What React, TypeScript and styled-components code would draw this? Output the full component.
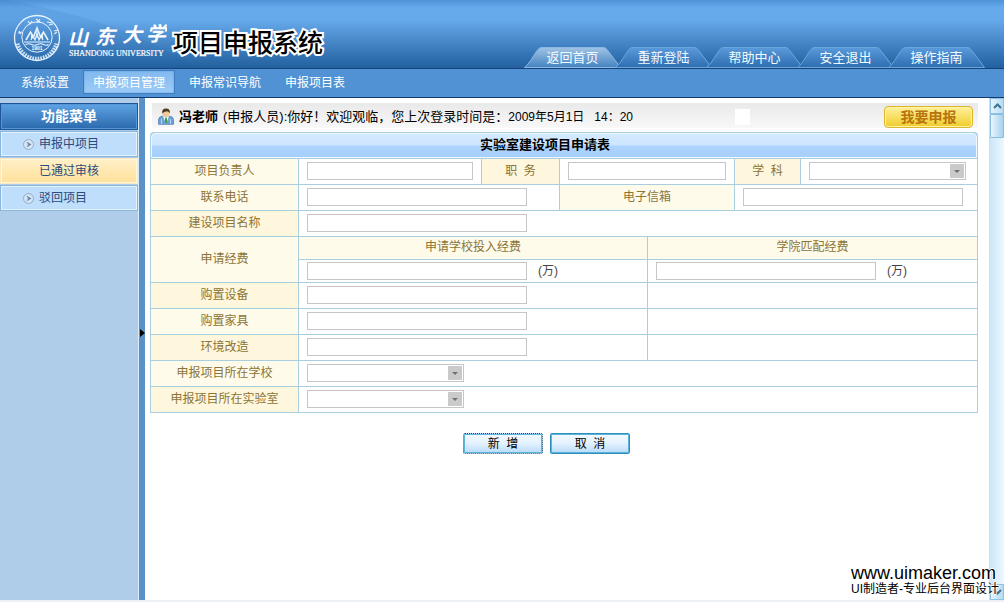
import React from 'react';
import styled, { createGlobalStyle, css } from 'styled-components';

const line = '#a9cfdf';
const sans = '"Liberation Sans", "Noto Sans CJK SC", sans-serif';

const GlobalStyle = createGlobalStyle`
  *, *::before, *::after { box-sizing: border-box; }
  body { margin: 0; background: #fff; color: #000; font: 12px/16px ${sans}; }
  button, input, select { font: inherit; }
  a { color: inherit; text-decoration: none; }
`;

const Page = styled.div`
  position: relative;
  display: flex;
  flex-direction: column;
  min-height: 100vh;
  border-bottom: 2px solid #edf1f5;
`;

const Header = styled.header`
  position: relative;
  display: flex;
  justify-content: space-between;
  align-items: flex-end;
  height: 69px;
  padding: 0 19px 0 12px;
  border-bottom: 1px solid #17427a;
  background: linear-gradient(#4d93d6 0, #67abec 8px, #66a9ea 20px, #4a8acb 40px, #22609f 68px);
`;

const HeaderWave = styled.svg`
  position: absolute;
  left: 0;
  top: 0;
`;

const Brand = styled.div`
  position: relative;
  display: flex;
  align-items: center;
  align-self: flex-start;
  height: 68px;
`;

const SystemName = styled.h1`
  margin: 18px 0 0 6px;
  font-size: 25px;
  line-height: 32px;
  font-weight: 500;
  color: #000;
  -webkit-text-stroke: 4px #fff;
  paint-order: stroke fill;
  white-space: nowrap;
`;

const Tabs = styled.nav`
  position: relative;
  display: flex;
`;

const Tab = styled.a`
  position: relative;
  width: 97px;
  height: 21px;
  margin-right: -6px;
  font-size: 13px;
  line-height: 21px;
  text-align: center;
  color: #f2fbff;
  &:last-child { margin-right: 0; }
`;

const TabShape = styled.svg`
  position: absolute;
  left: 0;
  top: 0;
`;

const TabText = styled.span`
  position: relative;
`;

const MainNav = styled.nav`
  display: flex;
  gap: 4px;
  height: 29px;
  padding: 1px 11px 3px;
  border-bottom: 1px solid #123a70;
  background: #5192d4;
`;

const NavItem = styled.a<{ $active?: boolean }>`
  padding: 1px 9px 0;
  border: 1px solid transparent;
  line-height: 23px;
  color: #fff;
  ${p => p.$active && css`
    border-color: #3f7dc0;
    background: linear-gradient(#83b9ef, #9ccbf7);
    box-shadow: inset 0 0 2px #5a97d6;
  `}
`;

const Body = styled.div`
  display: flex;
  flex: 1;
`;

const Sidebar = styled.aside`
  width: 139px;
  padding-top: 5px;
  border-right: 1px solid #dcecfa;
  background: #afcce9;
`;

const MenuTitle = styled.h2`
  margin: 0;
  height: 27px;
  border: 1px solid #1d5596;
  box-shadow: inset 0 0 0 1px #5596d6;
  background: linear-gradient(#5fa3e4, #2a69ad);
  color: #fff;
  font-size: 14px;
  line-height: 25px;
  text-align: center;
`;

const MenuItem = styled.a<{ $active?: boolean }>`
  display: flex;
  align-items: center;
  gap: 5px;
  height: 26px;
  margin-top: 1px;
  padding-left: 22px;
  border: 1px solid ${p => (p.$active ? '#fbe9bd' : '#8ab6db')};
  box-shadow: inset 0 0 0 1px ${p => (p.$active ? '#fff6dc' : '#e2f3ff')};
  background: ${p => (p.$active ? 'linear-gradient(#fff0c8, #ffe09a)' : '#bfdefc')};
  color: #2c4a7c;
`;

const IconSlot = styled.span`
  display: flex;
  width: 11px;
`;

const Splitter = styled.button`
  display: flex;
  align-items: center;
  justify-content: flex-end;
  width: 6px;
  padding: 0 0 32px;
  border: 0;
  background: #5a92c8;
`;

const Content = styled.main`
  flex: 1;
  min-width: 0;
  padding: 5px 11px 20px 5px;
`;

const InfoBar = styled.div`
  display: flex;
  align-items: center;
  height: 25px;
  margin-left: 2px;
  padding: 2px 5px 0 6px;
  background: linear-gradient(#e9e9e9, #f8f8f8);
  font-size: 13px;
  white-space: nowrap;
`;

const UserName = styled.strong`
  margin: 0 5px;
`;

const LoginTime = styled.time`
  font-size: 12px;
`;

const Clock = styled.span`
  margin-left: 10px;
`;

const BlankImage = styled.span`
  width: 15px;
  height: 16px;
  margin-left: auto;
  background: #fff;
`;

const ApplyButton = styled.button`
  width: 89px;
  height: 22px;
  margin-left: 134px;
  padding: 0;
  border: 1px solid #dcb52c;
  border-radius: 4px;
  box-shadow: inset 0 0 0 1px #fff3a4;
  background: linear-gradient(#fff09a, #f0cc2c);
  color: #b8740e;
  font-size: 14px;
  line-height: 18px;
  font-weight: 700;
`;

const FormGrid = styled.form`
  display: grid;
  grid-template-columns:
    minmax(0, 147fr) minmax(0, 182fr) minmax(0, 77fr) minmax(0, 87fr)
    minmax(0, 86fr) minmax(0, 65fr) minmax(0, 176fr);
  grid-auto-rows: minmax(22px, auto);
  gap: 1px;
  margin-top: 4px;
  padding: 1px;
  border-radius: 4px 4px 0 0;
  background: ${line};
`;

const FormTitle = styled.h2`
  grid-column: 1 / -1;
  height: 25px;
  margin: 0;
  padding-right: 38px;
  border: 1px solid #eff8ff;
  border-radius: 4px 4px 0 0;
  background: linear-gradient(#d3e9ff 0, #cde6ff 48%, #aed3fd 52%, #a6cffc 100%);
  font-size: 13px;
  line-height: 21px;
  text-align: center;
`;

const Label = styled.label<{ $span?: number; $rows?: number; $tone?: 'deep'; $low?: boolean }>`
  display: flex;
  align-items: center;
  justify-content: center;
  grid-column: span ${p => p.$span ?? 1};
  grid-row: span ${p => p.$rows ?? 1};
  min-height: ${p => (p.$low ? 22 : 25)}px;
  padding-bottom: ${p => (p.$low || p.$rows ? 2 : 1)}px;
  background: ${p => (p.$tone ? '#fef7dd' : '#fffbeb')};
  color: #8c7434;
`;

const Field = styled.div<{ $span?: number; $low?: boolean }>`
  display: flex;
  align-items: center;
  gap: 11px;
  grid-column: span ${p => p.$span ?? 1};
  min-height: ${p => (p.$low ? 22 : 25)}px;
  padding: ${p => (p.$low ? '0 8px' : '0 8px 1px')};
  background: #fff;
  color: #444;
`;

const TextInput = styled.input`
  flex: 1;
  min-width: 0;
  max-width: 220px;
  height: 18px;
  padding: 0 4px;
  border: 1px solid #c6c6c6;
  background: #fff;
`;

const SelectBox = styled.span`
  position: relative;
  flex: 1;
  max-width: 157px;
  height: 18px;
`;

const NativeSelect = styled.select`
  display: block;
  width: 100%;
  height: 18px;
  padding: 0 18px 0 4px;
  border: 1px solid #c6c6c6;
  border-radius: 0;
  background: #fff;
  appearance: none;
`;

const SelectArrow = styled.span`
  position: absolute;
  top: 2px;
  right: 2px;
  display: flex;
  align-items: center;
  justify-content: center;
  width: 14px;
  height: 14px;
  background: #cacaca;
  pointer-events: none;
`;

const Actions = styled.div`
  display: flex;
  justify-content: center;
  gap: 7px;
  margin-top: 20px;
  padding-right: 35px;
`;

const ActionButton = styled.button<{ $primary?: boolean }>`
  width: 80px;
  height: 21px;
  padding: 1px 0 0;
  border: 1px ${p => (p.$primary ? 'dotted #12506c' : 'solid #2f8dbd')};
  border-radius: 2px;
  box-shadow: inset 0 0 0 1px #5cb4dc;
  background: #5cb4dc linear-gradient(#f4fbff, #e3f1ff 50%, #b8dafa);
  line-height: 18px;
`;

const Scrollbar = styled.div`
  display: flex;
  flex-direction: column;
  width: 15px;
  border-left: 1px solid #c5e2f4;
  background: linear-gradient(90deg, #cbe6f7, #eef8fe);
`;

const ScrollButton = styled.button`
  display: flex;
  align-items: center;
  justify-content: center;
  height: 16px;
  padding: 0;
  border: 1px solid #8fc3e2;
  background: linear-gradient(90deg, #e3f4fe, #b6dcf2);
  &:last-child { margin-top: auto; }
`;

const ScrollThumb = styled.span`
  height: 24px;
  border: 1px solid #86bcdf;
  border-radius: 1px;
  background: linear-gradient(90deg, #e8f6ff, #a9d2ee);
`;

const Credit = styled.footer`
  position: absolute;
  right: 5px;
  bottom: 3px;
  color: #000;
  white-space: nowrap;
  text-shadow: 1px 0 #fff, -1px 0 #fff, 0 1px #fff, 0 -1px #fff;
`;

const CreditSite = styled.div`
  font-size: 18px;
  line-height: 16px;
`;

function UniversityLogo() {
  return (
    <svg width="155" height="68" viewBox="12 0 155 68" role="img" aria-label="山东大学">
      <g fill="none" stroke="#e6f3ff">
        <circle cx="37" cy="38" r="22.5" strokeWidth="1.3" />
        <circle cx="37" cy="37" r="15.2" strokeWidth="1" />
        <path d="M26 40l4.500-8 3 5 3.500-9 3.500 9 3-5 4.500 8" strokeWidth="1.6" />
        <path d="M31 40l2-4 2 4 2-6 2 6 2-4 2 4" strokeWidth="1.2" />
        <path d="M37 28v10M31.500 33v6M42.500 33v6" strokeWidth="1.1" />
        <path d="M24 42h26M25.500 44.500q3-1.500 6 0t6 0 6 0 5 0" strokeWidth="1.1" />
        <path d="M18 33l4-1m-3-1l2 3M28 21l2 3 2-3M36 19l4 3m0-3l-3 4M47 22l5 1m-3 2l4-1M54 31l4-1m-4 4l3-2" strokeWidth="1.1" />
        <path d="M17.6 43.5A20 20 0 0 0 56.4 43.5" strokeWidth="3.8" strokeDasharray="1.8 .9" opacity=".85" />
      </g>
      <text x="37" y="50" fontSize="5" fontWeight="700" textAnchor="middle" fill="#fff" fontFamily="Liberation Sans, sans-serif">1901</text>
      <text x="68 95 122 146" y="45 44 42 41" fontSize="20" fontStyle="italic" fontWeight="700" fill="#fff" fontFamily="Noto Sans CJK SC, sans-serif">山东大学</text>
      <text x="69" y="56" fontSize="8" fill="#fff" stroke="#fff" strokeWidth=".2" fontFamily="Liberation Serif, serif">SHANDONG UNIVERSITY</text>
    </svg>
  );
}

function TopTab({ text, active }: { text: string; active?: boolean }) {
  const id = active ? 'tab-on' : 'tab-off';
  return (
    <Tab href="#">
      <TabShape width="97" height="21" viewBox="0 0 97 21" aria-hidden="true">
        <defs>
          <linearGradient id={id} x1="0" y1="0" x2="0" y2="1">
            <stop offset="0" stopColor={active ? '#9fc3e4' : '#5a9ada'} />
            <stop offset="1" stopColor={active ? '#4583c2' : '#2e6db0'} />
          </linearGradient>
        </defs>
        <path d="M.5 20.5C7 15 10 7 14 2.500Q15.500 .5 18 .5H79Q81.500 .5 83 2.500L96.500 20.500Z" fill={`url(#${id})`} stroke={active ? '#8ab8e3' : '#6ca6de'} />
      </TabShape>
      <TabText>{text}</TabText>
    </Tab>
  );
}

function SideLink({ text, active }: { text: string; active?: boolean }) {
  return (
    <MenuItem href="#" $active={active}>
      <IconSlot>
        {!active && (
          <svg width="11" height="11" viewBox="0 0 11 11" aria-hidden="true">
            <circle cx="5.500" cy="5.500" r="5" fill="#d3e5f6" stroke="#94abc4" />
            <path d="M3.500 2.500L8.500 5.500 3.500 8.500 5 5.500Z" fill="#6f87a3" />
          </svg>
        )}
      </IconSlot>
      {text}
    </MenuItem>
  );
}

function DropDown({ id }: { id: string }) {
  return (
    <SelectBox>
      <NativeSelect id={id} />
      <SelectArrow>
        <svg width="6" height="3" viewBox="0 0 6 3" aria-hidden="true"><path d="M0 0H6L3 3Z" fill="#707070" /></svg>
      </SelectArrow>
    </SelectBox>
  );
}

function UserIcon() {
  return (
    <svg width="16" height="17" viewBox="0 0 16 17" aria-hidden="true">
      <path d="M.6 16.300V11.500Q.8 8.500 4.500 8.200L8 10 11.500 8.200Q15.200 8.500 15.400 11.500V16.300Z" fill="#6fa3d3" stroke="#487bae" strokeWidth=".8" />
      <path d="M5 8.300L8 16 11 8.300Z" fill="#f6fbff" />
      <path d="M7.200 9.500H8.800L9.300 14 8 16 6.700 14Z" fill="#3f9d52" />
      <path d="M3.500 11V16M12.500 11V16" stroke="#b3d2ee" />
      <ellipse cx="8" cy="5" rx="3.400" ry="4" fill="#f2c79b" />
      <path d="M4.300 5.500Q3.500 .4 8 .4T11.700 5.500Q11 3.500 9 3.300 6 3.600 4.300 5.500Z" fill="#4c3a20" />
    </svg>
  );
}

const costRows: { id: string; text: string; tone?: 'deep' }[] = [
  { id: 'equipment', text: '购置设备', tone: 'deep' },
  { id: 'furniture', text: '购置家具' },
  { id: 'environment', text: '环境改造', tone: 'deep' },
];

export default function App() {
  return (
    <>
      <GlobalStyle />
      <Page>
        <Header>
          <HeaderWave width="260" height="68" viewBox="0 0 260 68" aria-hidden="true">
            <path d="M0 0H8Q80 14 120 30T200 68H0Z" fill="#1f5fa8" opacity=".1" />
          </HeaderWave>
          <Brand>
            <UniversityLogo />
            <SystemName>项目申报系统</SystemName>
          </Brand>
          <Tabs>
            <TopTab text="返回首页" active />
            <TopTab text="重新登陆" />
            <TopTab text="帮助中心" />
            <TopTab text="安全退出" />
            <TopTab text="操作指南" />
          </Tabs>
        </Header>
        <MainNav>
          <NavItem href="#">系统设置</NavItem>
          <NavItem href="#" $active>申报项目管理</NavItem>
          <NavItem href="#">申报常识导航</NavItem>
          <NavItem href="#">申报项目表</NavItem>
        </MainNav>
        <Body>
          <Sidebar>
            <MenuTitle>功能菜单</MenuTitle>
            <SideLink text="申报中项目" />
            <SideLink text="已通过审核" active />
            <SideLink text="驳回项目" />
          </Sidebar>
          <Splitter type="button" aria-label="收起菜单">
            <svg width="5" height="8" viewBox="0 0 5 8" aria-hidden="true"><path d="M0 0L5 4 0 8Z" fill="#000" /></svg>
          </Splitter>
          <Content>
            <InfoBar>
              <UserIcon />
              <UserName>冯老师</UserName>
              <span>(申报人员):你好！欢迎观临，您上次登录时间是：</span>
              <LoginTime>2009年5月1日<Clock>14：20</Clock></LoginTime>
              <BlankImage />
              <ApplyButton type="button">我要申报</ApplyButton>
            </InfoBar>
            <FormGrid id="apply">
              <FormTitle>实验室建设项目申请表</FormTitle>

              <Label htmlFor="leader">项目负责人</Label>
              <Field><TextInput id="leader" /></Field>
              <Label htmlFor="post" $tone="deep">职&nbsp;&nbsp;务</Label>
              <Field $span={2}><TextInput id="post" /></Field>
              <Label htmlFor="subject" $tone="deep">学&nbsp;&nbsp;科</Label>
              <Field><DropDown id="subject" /></Field>

              <Label htmlFor="phone">联系电话</Label>
              <Field $span={2}><TextInput id="phone" /></Field>
              <Label htmlFor="email" $span={2}>电子信箱</Label>
              <Field $span={2}><TextInput id="email" /></Field>

              <Label htmlFor="project" $tone="deep">建设项目名称</Label>
              <Field $span={6}><TextInput id="project" /></Field>

              <Label as="div" $rows={2}>申请经费</Label>
              <Label htmlFor="school-fund" $span={3} $low>申请学校投入经费</Label>
              <Label htmlFor="college-fund" $span={3} $low>学院匹配经费</Label>
              <Field $span={3} $low><TextInput id="school-fund" />(万)</Field>
              <Field $span={3} $low><TextInput id="college-fund" />(万)</Field>

              {costRows.map(row => (
                <React.Fragment key={row.id}>
                  <Label htmlFor={row.id} $tone={row.tone}>{row.text}</Label>
                  <Field $span={3}><TextInput id={row.id} /></Field>
                  <Field $span={3} />
                </React.Fragment>
              ))}

              <Label htmlFor="school">申报项目所在学校</Label>
              <Field $span={6}><DropDown id="school" /></Field>
              <Label htmlFor="lab" $tone="deep">申报项目所在实验室</Label>
              <Field $span={6}><DropDown id="lab" /></Field>
            </FormGrid>
            <Actions>
              <ActionButton type="submit" form="apply" $primary>新&nbsp;&nbsp;增</ActionButton>
              <ActionButton type="reset" form="apply">取&nbsp;&nbsp;消</ActionButton>
            </Actions>
          </Content>
          <Scrollbar>
            <ScrollButton type="button" aria-label="向上滚动">
              <svg width="9" height="6" viewBox="0 0 9 6" aria-hidden="true"><path d="M1 5L4.500 1.500 8 5" fill="none" stroke="#3f7394" strokeWidth="2" /></svg>
            </ScrollButton>
            <ScrollThumb />
            <ScrollButton type="button" aria-label="向下滚动">
              <svg width="9" height="6" viewBox="0 0 9 6" aria-hidden="true"><path d="M1 1L4.500 4.500 8 1" fill="none" stroke="#3f7394" strokeWidth="2" /></svg>
            </ScrollButton>
          </Scrollbar>
        </Body>
        <Credit>
          <CreditSite>www.uimaker.com</CreditSite>
          <div>UI制造者-专业后台界面设计</div>
        </Credit>
      </Page>
    </>
  );
}
